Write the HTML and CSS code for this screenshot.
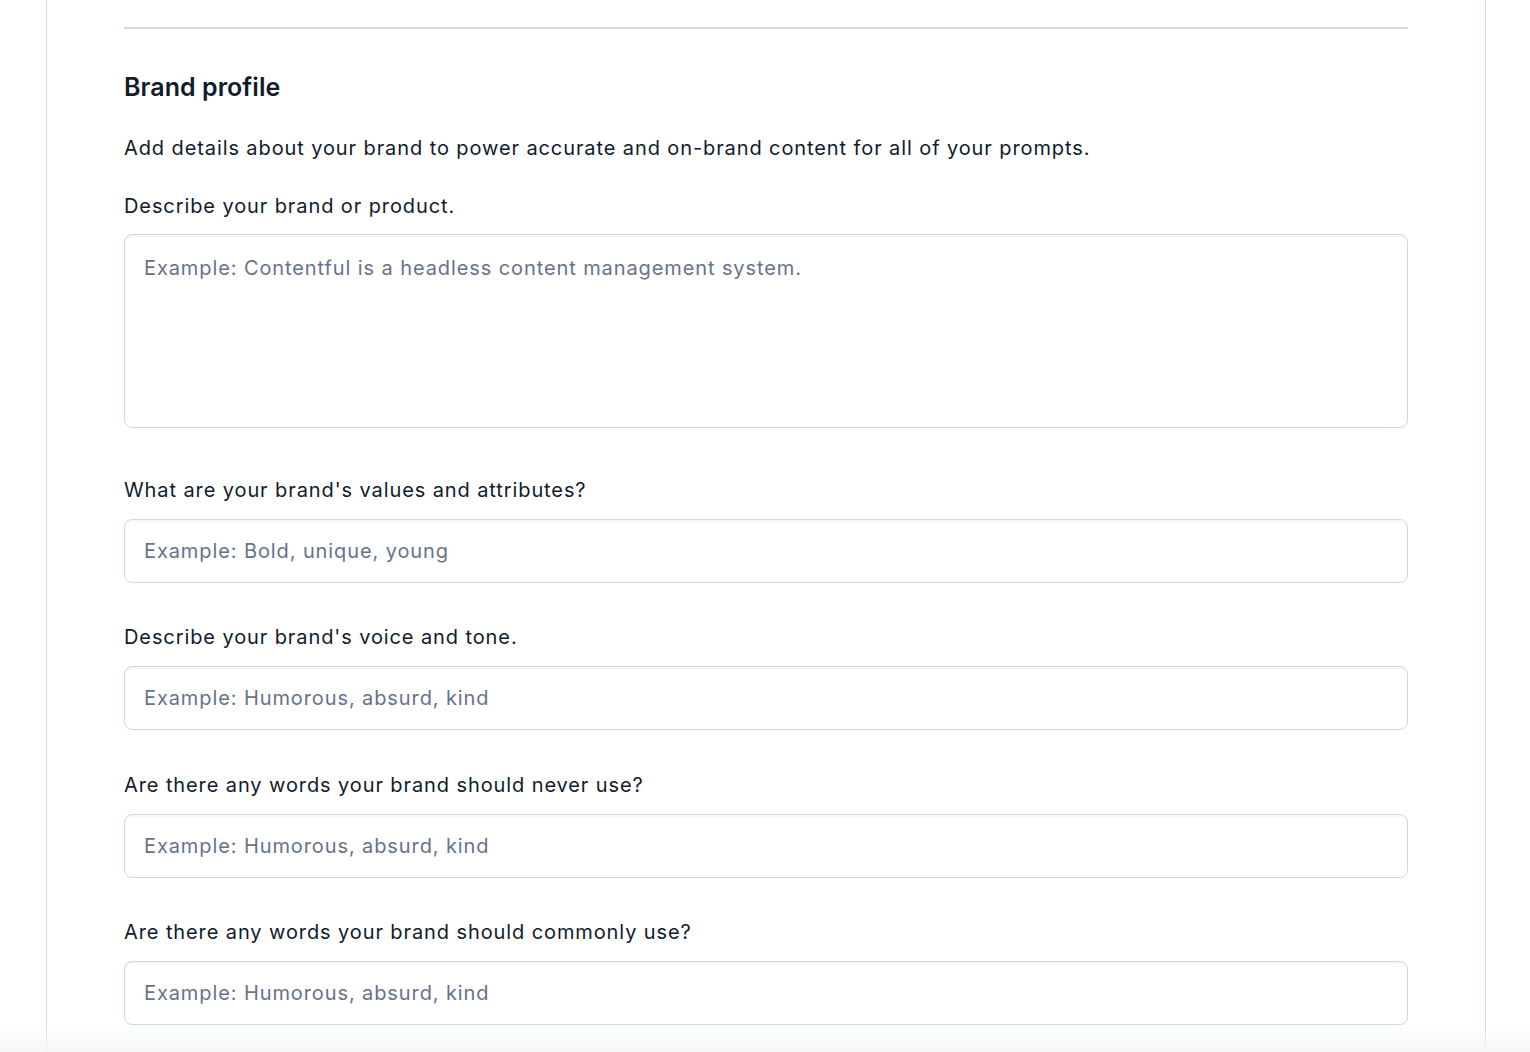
FILE: index.html
```html
<!DOCTYPE html>
<html lang="en">
<head>
    <meta charset="UTF-8">
    <meta name="viewport" content="width=device-width, initial-scale=1.0">
    <title>Brand profile</title>
    <link rel="stylesheet" href="styles.css">
</head>
<body>
    <div class="page">
        <hr class="divider">

        <h2>Brand profile</h2>
        <p class="intro">Add details about your brand to power accurate and on-brand content for all of your prompts.</p>

        <form class="brand-form">
            <div class="form-group form-group-area">
                <label for="description">Describe your brand or product.</label>
                <textarea id="description" placeholder="Example: Contentful is a headless content management system."></textarea>
            </div>

            <div class="form-group">
                <label for="values">What are your brand's values and attributes?</label>
                <input type="text" id="values" placeholder="Example: Bold, unique, young">
            </div>

            <div class="form-group">
                <label for="tone">Describe your brand's voice and tone.</label>
                <input type="text" id="tone" placeholder="Example: Humorous, absurd, kind">
            </div>

            <div class="form-group">
                <label for="avoid">Are there any words your brand should never use?</label>
                <input type="text" id="avoid" placeholder="Example: Humorous, absurd, kind">
            </div>

            <div class="form-group">
                <label for="common">Are there any words your brand should commonly use?</label>
                <input type="text" id="common" placeholder="Example: Humorous, absurd, kind">
            </div>
        </form>
    </div>

    <div class="footer-fade"></div>
</body>
</html>
```

FILE: styles.css
```css
html, body {
    margin: 0;
    height: 100%;
    overflow: hidden;
    background: #fff;
}
body {
    font-family: Inter, "Noto Sans", "Liberation Sans", sans-serif;
    font-size: 20px;
    line-height: 30px;
    letter-spacing: 0.9px;
    color: #111b2b;
}
.page {
    box-sizing: border-box;
    width: 1440px;
    min-height: 100%;
    margin-left: 46px;
    padding: 27px 77px 0;
    border-left: 1px solid #d3dce0;
    border-right: 1px solid #d3dce0;
}
.divider {
    margin: 0;
    height: 2px;
    border: none;
    background-color: #cfd9e0;
}
h2 {
    margin: 43px 0 0;
    font-size: 25px;
    line-height: 30px;
    font-weight: 600;
    letter-spacing: 0.05px;
}
.intro {
    margin: 31px 0 0;
}
.brand-form {
    margin-top: 28px;
}
.form-group {
    margin-bottom: 39.25px;
}
.form-group-area {
    margin-bottom: 47px;
}
label {
    display: block;
    margin-bottom: 14px;
}
.form-group-area label {
    margin-bottom: 13px;
}
input[type="text"],
textarea {
    display: block;
    box-sizing: border-box;
    width: 100%;
    margin: 0;
    padding: 0 19px;
    border: 1px solid #cfd9e0;
    border-radius: 8px;
    box-shadow: inset 0 2px 0 rgba(225, 228, 232, 0.35);
    font-family: inherit;
    font-size: 20px;
    letter-spacing: 0.9px;
    color: #111b2b;
    background: #fff;
    outline: none;
}
input[type="text"] {
    height: 64px;
    line-height: 30px;
}
textarea {
    height: 194px;
    padding-top: 18px;
    line-height: 30px;
    resize: none;
}
::placeholder {
    color: #67728a;
    opacity: 1;
}
.footer-fade {
    position: fixed;
    left: 0;
    right: 0;
    bottom: 0;
    height: 28px;
    background: linear-gradient(to bottom, rgba(245, 247, 249, 0), rgba(243, 245, 247, 0.9));
    pointer-events: none;
}
```
